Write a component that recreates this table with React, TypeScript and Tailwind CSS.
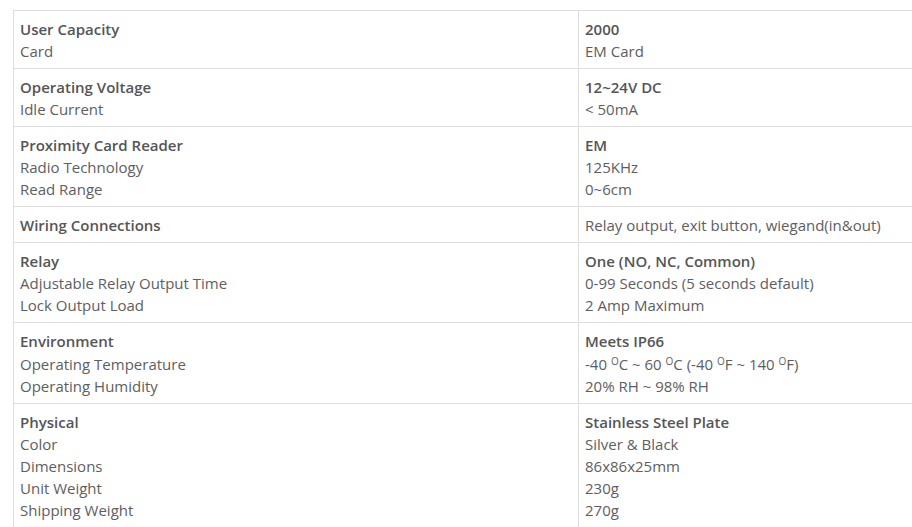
const rows: { head: [string, React.ReactNode]; lines: [string, React.ReactNode][] }[] = [
  { head: ["User Capacity", "2000"], lines: [["Card", "EM Card"]] },
  { head: ["Operating Voltage", "12~24V DC"], lines: [["Idle Current", "< 50mA"]] },
  {
    head: ["Proximity Card Reader", "EM"],
    lines: [
      ["Radio Technology", "125KHz"],
      ["Read Range", "0~6cm"],
    ],
  },
  { head: ["Wiring Connections", ""], lines: [] },
  {
    head: ["Relay", "One (NO, NC, Common)"],
    lines: [
      ["Adjustable Relay Output Time", "0-99 Seconds (5 seconds default)"],
      ["Lock Output Load", "2 Amp Maximum"],
    ],
  },
  {
    head: ["Environment", "Meets IP66"],
    lines: [
      [
        "Operating Temperature",
        <>
          -40 <sup className="text-[10px]">O</sup>C ~ 60 <sup className="text-[10px]">O</sup>C (-40{" "}
          <sup className="text-[10px]">O</sup>F ~ 140 <sup className="text-[10px]">O</sup>F)
        </>,
      ],
      ["Operating Humidity", "20% RH ~ 98% RH"],
    ],
  },
  {
    head: ["Physical", "Stainless Steel Plate"],
    lines: [
      ["Color", "Silver & Black"],
      ["Dimensions", "86x86x25mm"],
      ["Unit Weight", "230g"],
      ["Shipping Weight", "270g"],
    ],
  },
];

export default function App() {
  return (
    <div className="h-[527px] w-[912px] overflow-hidden bg-white pl-[13px] pt-[10px] font-['Open_Sans',sans-serif] text-[15px] leading-[22px] text-[#5e5e5e]">
      <table className="w-[1130px] table-fixed border-collapse">
        <tbody>
          {rows.map((r) => (
            <tr key={r.head[0]}>
              <td className="w-[565px] border border-[#dedede] px-[6px] pt-[7px] pb-[6px] align-top">
                <div className="font-semibold text-[#555555]">{r.head[0]}</div>
                {r.lines.map((l) => (
                  <div key={l[0]} className={l[0] === "Operating Temperature" ? "pt-[1px]" : ""}>
                    {l[0]}
                  </div>
                ))}
              </td>
              <td className="border border-[#dedede] px-[6px] pt-[7px] pb-[6px] align-top">
                {r.head[0] === "Wiring Connections" ? (
                  <div>Relay output, exit button, wiegand(in&amp;out)</div>
                ) : (
                  <div className="font-semibold text-[#555555]">{r.head[1]}</div>
                )}
                {r.lines.map((l) => (
                  <div key={l[0]} className={l[0] === "Operating Temperature" ? "pt-[1px]" : ""}>
                    {l[1]}
                  </div>
                ))}
              </td>
            </tr>
          ))}
        </tbody>
      </table>
    </div>
  );
}
